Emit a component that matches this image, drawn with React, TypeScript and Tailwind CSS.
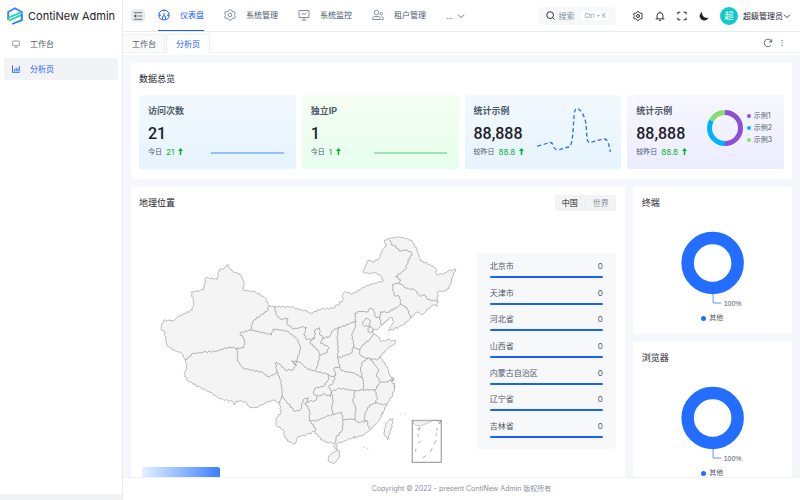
import { useState } from 'react';
import type { ReactNode } from 'react';
import { clsx } from 'clsx';

type Point = [number, number];

// Small deterministic displacement so that straight segments look like surveyed borders
function roughen(points: Point[], closed = false): string {
  const src = closed ? [...points, points[0]] : points;
  let d = `M${src[0][0]} ${src[0][1]}`;
  for (let i = 1; i < src.length; i++) {
    const [x0, y0] = src[i - 1];
    const [x1, y1] = src[i];
    const len = Math.hypot(x1 - x0, y1 - y0);
    const steps = Math.max(1, Math.round(len / 2));
    for (let s = 1; s < steps; s++) {
      const t = s / steps;
      const n = Math.sin((x0 + y1) * 12.9 + s * 78.2) * 0.8;
      const nx = -(y1 - y0) / len;
      const ny = (x1 - x0) / len;
      d += `L${(x0 + (x1 - x0) * t + nx * n).toFixed(1)} ${(y0 + (y1 - y0) * t + ny * n).toFixed(1)}`;
    }
    d += `L${x1} ${y1}`;
  }
  return closed ? d + 'Z' : d;
}

function parse(s: string): Point[] {
  return s.trim().split(/\s+/).map((p) => p.split(',').map(Number) as Point);
}

const mainland = parse(`
226.7,265 228.7,265 229.5,268 233,271.7 240,274 244.3,281.7 243.3,290 256,292.3 265,297.7 269.3,306 275,306.7 291.7,307
300,310 305,310.5 311,313.3 321.7,309 333,308.3 338,305 343,300 342.7,295 345,291.7 353,294 366.7,285.7 383.3,281
381.7,276.7 375,272.3 370,274 363.3,272.3 365,266.7 368.3,260.7 375,261.7 379.3,258.3 383.3,249 387.3,245 384.3,241.7
388.3,238.3 400,237 411.7,240 417.3,250 420.7,261 430,264.3 436,268.3 436.7,274.3 443.3,274.3 448.3,271 456,269.3
452.7,276.7 450.7,285 446.7,291 438.3,291.7 437.7,300 437.7,306.7 433.3,305 428.3,309 423.3,314.3 416.7,312.3
411,318.3 403.3,325 391.7,330 388.3,331 390.7,326.7 394,321.7 392.7,318.3 389,318.3 386,322.3 381.7,325 378.3,329
373.3,330 374,334.3 380,337.7 381,341.7 387.3,340 396,341 395,343.7 388.3,348.3 380,356.7 387.3,366.7 390,375
394.3,380 392,383 395,386 395,388.3 392.7,395 387.3,404.3 383.3,411.7 379.3,421 370,430 363.3,435.7 353.3,437.7
343.3,441.7 336.7,444 337.3,450 334.7,448.3 334.7,443.3 325,442.3 318.3,436.7 315,431.7 306.7,435 298.3,436.7
295,444.3 290,442 285,438.3 283.3,430 276.7,426 275.7,420 281,412.3 280,403.3 273.3,400 265,403.3 256.7,407.7
250,407.7 245,401.7 236.7,401 234.3,405 232.7,401.7 220,399 210,392.3 198.3,386.7 186.7,380 184,373.3 187.3,368.3
185,359.3 181.7,353.3 173,350 166.7,345 165,333.3 160.7,328.3 163.3,321 169,320 173.3,321 178.3,316.7 192.3,310
194,301.7 191,292.3 203.3,290 206,277.7 217.3,279.3 219,270 224,268.3`);

const islands = [
  '390,419 393.3,419 391.7,428.3 387.7,440 384,433.3 385.7,425',
  '331.7,453.3 336,451 340,451.7 339,458.3 334,464 329,461.7 328.7,457.7',
].map(parse);

const borders = [
  '269.3,306 266.7,311.7 260,315.7 252.7,321.7 250.7,330 240,333.3 245,340 244,347.7 237.3,348.3',
  '237.3,348.3 228.3,347.3 217.3,351 203.3,352.3 191.7,354 187.3,359.3 185,359.3',
  '237.3,348.3 237.7,361.7 243.3,368.3 263.3,372.7 267.3,376.7 274,375 276.7,371.7',
  '276.7,371.7 280.7,380 282.7,395 281.7,396.7 280,403.3',
  '250.7,330 261.7,332.3 271.7,335 273.3,329 286.7,331 296.7,338.3 301,348.3 297.7,358.3 295,366.7',
  '276.7,371.7 276,362.3 280,364.3 285,370 293.3,370 295,366.7',
  '297,366 291.7,361 300,362.3 306.7,368.3 313.3,370.7 326.7,374 331.7,376.7 336,375',
  '274,306 276.7,315 280.7,319.3 288.3,318.3 286.7,323.3 293.3,329.3 301.7,327.3 306.7,327.3 304.3,333.3 306.7,340 315,338.3',
  '310,341.7 315,338.3 315,330 320,327.7 320,335 323.3,337.7 320.7,343.3 328.3,346.7 327.7,352.3 320,355.7 318.3,350 313.3,346.7 310,341.7',
  '320,355.7 318.3,363.3 316,370',
  '322.7,338.3 330,336.7 331.7,331.7 338.3,327.3 341.7,327.3 350,323.3 356,321.7',
  '338.3,327.3 337.7,338.3 338.3,350 337.7,358.3 340,366.7',
  '356,321.7 355,328.3 351.7,335 354.3,345 353.3,347.7 351.7,353.3 345,356 337.7,358.3',
  '353.3,347.7 360,349.3 364,344.3 370,339.3 374,334.3',
  '356,321.7 355,313.3 360,311.7 368.3,311.7 370,308.3 374,310 375,315.7 380,319 381.7,325',
  '380,319 380.7,311.7 388.3,312.3 398.3,306.7 401,304.3 400,296.7 394,295 393.3,288.3 392.3,285 398.3,283.3',
  '401,284.3 398.3,283.3 401,280 395.7,276.7 405,270 408.3,261.7 412.3,253.3 407.3,250 399.3,251 396,246 391.7,245 390.7,240',
  '401,284.3 406.7,288.3 415,290 420.7,296.7 425,295 428.3,300 437.7,301',
  '401,304.3 407.3,307.7 411,318.3',
  '362.7,323.3 366,318.3 370,320 370,325.7 365,326.7 362.7,323.3',
  '370,325.7 372.7,328.3 372.7,331.7 369.3,332.3 368.3,328.3 370,325.7',
  '360,349.3 360,354.3 365,358.3 370,358.3 376.7,360 380,356.7',
  '368.3,358.3 361.7,363.3 361,370 362.7,378.3 364,385 363.3,390 355,391',
  '362.7,378.3 355,373.3 341.7,371 340,366.7 334,368.3 336,375 333.3,383.3 328.3,386.7 331.7,391.7',
  '328,374 329.3,379 323.3,386.7 315,388.3 313.3,393.3 318.3,396.7',
  '331.7,391.7 330.7,396.7 323.3,394 318.3,396.7 315,401 306.7,401.7',
  '281.7,396 286.7,401.7 295,411.7 300.7,410 303.3,400 308.3,397.7 308,401.7 305,403.3 310,410 309.3,420',
  '309.3,420 315,421.7 326.7,416.7 341.7,412.3 343.3,420 355,419',
  '309.3,420 311.7,424 316,428.3 315,431.7',
  '331.7,391.7 333.3,401.7 331.7,408.3 333.3,415',
  '331.7,391.7 340,388.3 355,391 353.3,401.7 356,408.3 355,419 358.3,422.7 367.3,421 369.3,429.3',
  '343.3,420 342.7,430 336,438.3 335,443',
  '367.3,421 364,420 366,411.7 370,405 376,403.3 377.3,396.7 375,390 363.3,390',
  '376,403.3 382,404 387,405',
  '375,390 380.7,382.3 376.7,375 379.3,370 375,365 370,358.3',
  '380.7,382.3 388.3,382.3 393,379',
].map(parse);

function ChinaMap() {
  return (
    <svg viewBox="139 227 330 240" className="block w-full" role="img" aria-label="中国">
      <g stroke="#aaa" strokeWidth="0.8" strokeLinejoin="round">
        <path d={roughen(mainland, true)} fill="#f4f4f4" />
        {islands.map((p, i) => (
          <path key={i} d={roughen(p, true)} fill="#f4f4f4" />
        ))}
        <g fill="none" stroke="#9c9c9c">
          {borders.map((p, i) => (
            <path key={i} d={roughen(p)} />
          ))}
          <path d="M391 378l3 2M391 380l2 1M394 386l1 3M395 383v2M364 447v1M368 448v1M400 415h1M405 414h1M397 329h1M383 412l-1 2M354 437l1 2" />
        </g>
      </g>
      <rect x="412.5" y="420.5" width="29" height="42" fill="#fff" stroke="#8c8c8c" />
      <path d="M413.500 421h19l-5 2.500-7 2.500-4-.5-3-2z" fill="#f4f4f4" stroke="#b4b4b4" strokeWidth="0.7" />
      <path
        d="M438 421l2 3 1-3M418 430l2-2.500v2.500zM418 434l.5 3M421 441l-2.500 2.500M416 449v3M423 458l3-2M430.500 452l2-3.500M434.500 444l2-3.500M436.500 436v-3M437 431l.5-3"
        fill="none"
        stroke="#999"
        strokeWidth="0.8"
      />
    </svg>
  );
}

function Icon({ children, className, box = 24, width = 2 }: { children: ReactNode; className?: string; box?: number; width?: number }) {
  return (
    <svg viewBox={`0 0 ${box} ${box}`} fill="none" stroke="currentColor" strokeWidth={width} className={clsx('shrink-0', className)} aria-hidden="true">
      {children}
    </svg>
  );
}

const gear = (
  <>
    <path
      d="M10.500 1.500h3l2 2.700 2.500 1.400 3.200-.2 1.500 2.600-1.500 3v2l1.500 3-1.500 2.600-3.200-.2-2.500 1.400-2 2.700h-3l-2-2.700L6 18.400l-3.200.2L1.300 16l1.500-3v-2l-1.500-3 1.500-2.600 3.200.2 2.500-1.400z"
      strokeLinejoin="round"
    />
    <circle cx="12" cy="12" r="3.600" />
  </>
);

function Chevron() {
  return (
    <Icon className="size-2" width={2.5}>
      <path d="M3 8l9 9 9-9" />
    </Icon>
  );
}

function Logo() {
  return (
    <svg viewBox="0 0 34 38" className="h-[18px] w-4 shrink-0" fill="none" strokeWidth="4" aria-hidden="true">
      <path d="M2.500 27V10.500L17 2.500l14.500 8V14" stroke="#3b82ff" />
      <path d="M3 22.500L30 11.500" stroke="#2ad3c0" />
      <path d="M4 29l27-12.500" stroke="#2dd6a5" />
      <path d="M31.500 15v12.500L11 36" stroke="#2b7bff" />
    </svg>
  );
}

const navItems = [
  {
    label: '仪表盘',
    icon: (
      <>
        <path d="M7.500 21.500A10.300 10.300 0 1 1 16.500 21.500" />
        <path d="M9 21.500v-5a3 3 0 0 1 6 0v5z" />
        <path d="M12 13.500V8M12 2v3M2 12.500h4M18 12.500h4" />
      </>
    ),
  },
  { label: '系统管理', icon: gear },
  {
    label: '系统监控',
    icon: (
      <>
        <path d="M2 3h20v14H2zM12 17v5M7 22h10" />
        <path d="M7 12l4-4 1.500 3.500L17 7" />
      </>
    ),
  },
  {
    label: '租户管理',
    icon: (
      <>
        <circle cx="9" cy="7" r="4.500" />
        <path d="M1.500 21v-2a4 4 0 0 1 4-4h7a4 4 0 0 1 4 4v2zM19 21h3.500v-2a4 4 0 0 0-3.500-4" />
        <circle cx="18.500" cy="9.500" r="2.500" />
      </>
    ),
  },
];

function Header() {
  return (
    <header className="flex h-8 shrink-0 items-center border-b border-[#e9ebef] pr-[9px] pl-2">
      <button className="grid h-[13px] w-3.5 shrink-0 place-items-center rounded-sm bg-[#e9eaee] text-[#4e5969]" aria-label="折叠菜单">
        <Icon className="size-2.5">
          <path d="M2 4h20M11 12h11M2 20h20" />
          <path d="M7 9l-4 3 4 3z" fill="currentColor" />
        </Icon>
      </button>
      <nav className="ml-[13px] flex h-full items-center gap-5 whitespace-nowrap text-[#4e5969]">
        {navItems.map((item, i) => (
          <a
            key={item.label}
            href="#"
            className={clsx('flex h-full items-center gap-2.5 border-b', i === 0 ? 'border-[#165dff] text-[#165dff]' : 'border-transparent')}
          >
            <Icon className={clsx('size-3', i > 0 && 'text-[#86909c]')}>{item.icon}</Icon>
            {item.label}
          </a>
        ))}
        <button className="flex items-center gap-1" aria-label="更多">
          ... <Chevron />
        </button>
      </nav>

      <div className="ml-auto flex items-center whitespace-nowrap text-[#1d2129]">
        <button className="flex h-[18px] items-center gap-[3px] rounded bg-[#f7f8fa] pr-[7px] pl-2 text-[#86909c]">
          <Icon className="size-[9px] text-[#1d2129]" width={2.4}>
            <circle cx="11" cy="11" r="9" />
            <path d="M17.500 17.500l5 5" />
          </Icon>
          搜索
          <kbd className="ml-1 rounded-sm bg-white px-[3px] font-[inherit] text-[6px] leading-[9px]">Ctrl + K</kbd>
        </button>
        <div className="ml-[17px] flex items-center gap-3">
          <button aria-label="设置">
            <Icon className="size-2.5" width={2.4}>{gear}</Icon>
          </button>
          <button aria-label="消息">
            <Icon className="size-2.5" width={2.2}>
              <path d="M5 19v-8a7 7 0 0 1 14 0v8M1.500 19h21M12 1.500V4M9.500 22.500h5" />
            </Icon>
          </button>
          <button aria-label="全屏">
            <Icon className="size-2.5" width={2.4}>
              <path d="M2 8V3h6M16 3h6v5M22 16v5h-6M8 21H2v-5" />
            </Icon>
          </button>
          <button aria-label="暗黑模式">
            <Icon className="size-2.5" width={1}>
              <path d="M7 3A10.500 10.500 0 1 0 22 16.500C14 18.500 6 12 7 3z" fill="currentColor" />
            </Icon>
          </button>
        </div>
        <button className="ml-[11px] flex items-center">
          <span className="mr-[5px] grid size-[18px] place-items-center rounded-full bg-[#14c9c9] text-[9px] text-white">超</span>
          超级管理员
          <Chevron />
        </button>
      </div>
    </header>
  );
}

function TabBar() {
  return (
    <div className="flex h-[21px] shrink-0 items-end border-b border-[#eef0f3] pr-3.5">
      <a href="#" className="flex h-[18px] items-center rounded-t-xs border border-b-0 border-l-0 border-[#f0f1f4] bg-[#fafafb] pr-2 pl-[9px] text-[#4e5969]">
        工作台
      </a>
      <a href="#" className="-mb-px ml-px flex h-[19px] items-center rounded-t-xs border border-b-0 border-[#eceef1] bg-white px-[9px] text-[#165dff]">
        分析页
      </a>
      <div className="ml-auto flex h-[18px] items-center gap-[5px]">
        <button aria-label="刷新" className="text-[#4e5969]">
          <Icon className="size-2.5" width={2.2}>
            <path d="M19 17.500A9 9 0 1 1 20.500 9M21 3v6.500h-6.500" />
          </Icon>
        </button>
        <button aria-label="更多操作" className="text-[#165dff]">
          <svg viewBox="0 0 8 8" className="size-2" fill="currentColor" aria-hidden="true">
            <path d="M3.500 1h1v1h-1zM3.500 3.500h1v1h-1zM3.500 6h1v1h-1z" />
          </svg>
        </button>
      </div>
    </div>
  );
}

function Sidebar() {
  const row = 'flex h-[22px] items-center gap-2.5 rounded-xs pl-2';
  return (
    <aside className="flex w-[123px] shrink-0 flex-col border-r border-[#e9ebef]">
      <div className="flex h-8 items-center gap-[5px] whitespace-nowrap pl-[7px] text-[11px] text-[#1d2129]">
        <Logo />
        ContiNew Admin
      </div>
      <nav className="mx-1 mt-px flex flex-col gap-[3px]">
        <a href="#" className={clsx(row, 'text-[#4e5969]')}>
          <Icon className="size-2 text-[#86909c]" width={2.4}>
            <path d="M2 3h20v14H2zM12 17v4M7 22h10" />
          </Icon>
          工作台
        </a>
        <a href="#" className={clsx(row, 'bg-[#f2f3f5] text-[#165dff]')}>
          <Icon className="size-2" width={2.6}>
            <path d="M1.500 1v21H23M7.500 19v-7M12.500 19V8M17.500 19v-9M22 19V3" />
          </Icon>
          分析页
        </a>
      </nav>
      <div className="mt-auto h-1.5 bg-[#f2f3f5]" />
    </aside>
  );
}

interface StatProps {
  title: string;
  value: string;
  label: string;
  delta: string;
  className: string;
  children: ReactNode;
}

function StatCard({ title, value, label, delta, className, children }: StatProps) {
  return (
    <section className={clsx('flex h-[74px] items-center justify-between rounded-xs bg-linear-to-b pl-[9px]', className)}>
      <div className="pb-0.5 whitespace-nowrap">
        <h3 className="text-[9px] leading-3 font-bold text-[#4e5969]">{title}</h3>
        <p className="mt-[7px] font-[Roboto,sans-serif] text-[16px] leading-5 font-medium text-[#1d2129]">{value}</p>
        <p className="mt-0.5 flex items-center gap-1 text-[7px] leading-3 text-[#4e5969]">
          {label}
          <span className="flex items-center gap-1 text-[8px] text-[#00b42a]">
            {delta}
            <svg viewBox="0 0 10 14" className="h-[7px] w-[5px]" fill="currentColor" aria-hidden="true">
              <path d="M5 0l5 6H6.500v8h-3V6H0z" />
            </svg>
          </span>
        </p>
      </div>
      {children}
    </section>
  );
}

function FlatLine({ color }: { color: string }) {
  return (
    <svg viewBox="0 0 73 50" className="mr-3 w-[73px]" aria-hidden="true">
      <path d="M0 46h73" stroke={color} strokeWidth="1.500" />
    </svg>
  );
}

const shares = [
  { name: '示例1', color: '#8d4eda', value: 50, start: 0 },
  { name: '示例2', color: '#00b2ff', value: 33, start: 50 },
  { name: '示例3', color: '#86df6c', value: 17, start: 83 },
];

function Overview() {
  return (
    <section className="bg-white px-2 pb-2.5">
      <h2 className="flex h-8 items-center text-[9px] text-[#1d2129]">数据总览</h2>
      <div className="grid grid-cols-4 gap-1.5">
        <StatCard title="访问次数" value="21" label="今日" delta="21" className="from-[#f2f9fe] to-[#e6f4fe]">
          <FlatLine color="#7fadff" />
        </StatCard>
        <StatCard title="独立IP" value="1" label="今日" delta="1" className="from-[#f5fef2] to-[#e6feee]">
          <FlatLine color="#8bd6a0" />
        </StatCard>
        <StatCard title="统计示例" value="88,888" label="较昨日" delta="88.8" className="from-[#f2f9fe] to-[#e6f4fe]">
          <svg viewBox="537 104 74 50" className="mr-2.5 mb-1.5 w-[74px]" aria-hidden="true">
            <path
              d="M537.300 146.200C542 145 547 143.500 550 142.500C554 142 553 149.800 557 149.800C562 149.500 565 147.500 569 147C575 144 572 108.500 576.500 108.500C581 108.500 585 117 586 124C587 133 586 142.500 589.500 142.500C595 142 600 139 604.500 139C608 139 609 146 610.500 152"
              fill="none"
              stroke="#2c6ff5"
              strokeWidth="1.300"
              strokeDasharray="4 2.500"
            />
          </svg>
        </StatCard>
        <StatCard title="统计示例" value="88,888" label="较昨日" delta="88.8" className="from-[#f7f7ff] to-[#ececff]">
          <div className="mr-3 mb-2 flex items-center gap-1">
            <svg viewBox="0 0 36 36" className="size-9 -rotate-90" fill="none" strokeWidth="5" aria-hidden="true">
              {shares.map((s) => (
                <circle key={s.name} cx="18" cy="18" r="15.500" pathLength="100" stroke={s.color} strokeDasharray={`${s.value} 100`} strokeDashoffset={-s.start} />
              ))}
            </svg>
            <ul className="whitespace-nowrap text-[7px] leading-3 text-[#4e5969]">
              {shares.map((s) => (
                <li key={s.name} className="flex items-center gap-[3px]">
                  <svg viewBox="0 0 4 4" className="size-1" aria-hidden="true">
                    <circle cx="2" cy="2" r="2" fill={s.color} />
                  </svg>
                  {s.name}
                </li>
              ))}
            </ul>
          </div>
        </StatCard>
      </div>
    </section>
  );
}

const provinces = ['北京市', '天津市', '河北省', '山西省', '内蒙古自治区', '辽宁省', '吉林省'];

function Geography() {
  const [region, setRegion] = useState('中国');

  return (
    <section className="bg-white pt-2 pr-[9px] pl-2">
      <div className="flex items-center justify-between">
        <h2 className="text-[9px] text-[#1d2129]">地理位置</h2>
        <fieldset className="flex h-4 items-center rounded-xs bg-[#f2f3f5]">
          {['中国', '世界'].map((name) => (
            <label
              key={name}
              className={clsx('border-[#e5e6eb] px-[7px] leading-2 not-last:border-r', region === name ? 'text-[#1d2129]' : 'text-[#86909c]')}
            >
              <input type="radio" name="region" value={name} checked={region === name} onChange={() => setRegion(name)} className="sr-only" />
              {name}
            </label>
          ))}
        </fieldset>
      </div>
      <div className="flex gap-2">
        <div className="min-w-0 flex-1 pt-4">
          <ChinaMap />
          <div className="ml-[3px] h-[11px] w-[78px] rounded-xs bg-linear-to-r from-[#e4f0ff] to-[#3d7eff]" />
        </div>
        <ul className="mt-[42px] flex h-[196px] w-[139px] flex-col justify-between rounded-xs bg-[#f7f8fa] px-[13px] pt-1.5 pb-[11px] text-[#4e5969]">
          {provinces.map((name) => (
            <li key={name} className="flex h-[19px] flex-col justify-between">
              <div className="flex justify-between leading-[14px]">
                <span>{name}</span>
                <span>0</span>
              </div>
              <div className="h-0.5 rounded-full bg-[#1a62ff]" />
            </li>
          ))}
        </ul>
      </div>
    </section>
  );
}

function PieCard({ title }: { title: string }) {
  return (
    <section className="h-[147px] shrink-0 bg-white px-[9px] pt-[9px]">
      <h2 className="text-[9px] leading-[14px] text-[#1d2129]">{title}</h2>
      <svg viewBox="-70 -36 140 84" className="mt-[17px] block h-[84px] w-full" aria-hidden="true">
        <circle r="25" fill="none" stroke="#246eff" strokeWidth="12.500" />
        <path d="M.5 31v9h8" fill="none" stroke="#5b93ff" />
        <text x="11" y="42.500" fontSize="7" fill="#4e5969" fontFamily="Liberation Sans, sans-serif">
          100%
        </text>
      </svg>
      <p className="flex items-center justify-center gap-[3px] text-[7px] leading-[14px] text-[#4e5969]">
        <svg viewBox="0 0 5 5" className="size-[5px]" aria-hidden="true">
          <circle cx="2.500" cy="2.500" r="2.500" fill="#246eff" />
        </svg>
        其他
      </p>
    </section>
  );
}

export default function App() {
  return (
    <div className="flex h-screen overflow-hidden bg-white font-[Inter,'Noto_Sans_CJK_SC',sans-serif] text-[8px] leading-3">
      <Sidebar />
      <div className="flex min-w-0 flex-1 flex-col">
        <Header />
        <TabBar />
        <main className="mt-0.5 min-h-0 flex-1 overflow-hidden bg-[#f5f7fd] p-2">
          <Overview />
          <div className="mt-2 grid grid-cols-[3.1fr_1fr] gap-2">
            <Geography />
            <div className="flex flex-col gap-2">
              <PieCard title="终端" />
              <PieCard title="浏览器" />
            </div>
          </div>
        </main>
        <footer className="flex h-[23px] shrink-0 items-center justify-center border-t border-[#f0f1f4] text-[7px] text-[#86909c]">
          Copyright © 2022 - present ContiNew Admin 版权所有
        </footer>
      </div>
    </div>
  );
}
